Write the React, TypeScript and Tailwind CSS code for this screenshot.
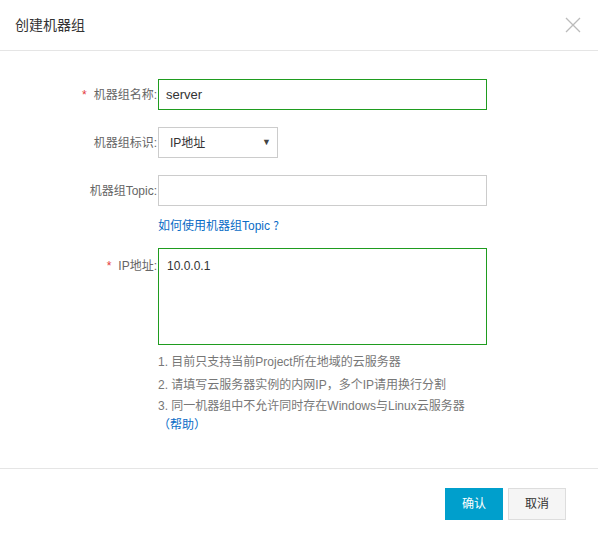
import React from 'react';

const font = "font-['Liberation_Sans','Noto_Sans_CJK_SC',sans-serif]";
const cjk = "font-['Noto_Sans_CJK_SC',sans-serif]";

const Label: React.FC<{ text: string; required?: boolean }> = ({ text, required }) => (
  <div className="w-[158px] shrink-0 text-right text-[12px] text-[#666] pr-[1px]">
    {required && <span className="text-[#e4393c] mr-[7px]">*</span>}
    {text}
  </div>
);

const App: React.FC = () => {
  return (
    <div className={`w-[598px] h-[540px] bg-white flex flex-col ${font}`}>
      {/* Header */}
      <div className="h-[51px] shrink-0 flex items-center justify-between pl-[15px] pr-[17px] border-b border-[#e5e5e5]">
        <span className="text-[14px] text-[#333]">创建机器组</span>
        <svg width="16" height="16" viewBox="0 0 16 16" className="text-[#bbb]">
          <path d="M1 1 L15 15 M15 1 L1 15" stroke="currentColor" strokeWidth="1.3" />
        </svg>
      </div>

      {/* Body */}
      <div className="flex-1 flex flex-col pt-[28px]">
        <div className="flex items-center">
          <Label text="机器组名称:" required />
          <div className="w-[329px] h-[31px] border border-[#1f9c1f] flex items-center px-[7px] text-[13px] text-[#333]">
            server
          </div>
        </div>

        <div className="flex items-center mt-[17px]">
          <Label text="机器组标识:" />
          <div className="w-[120px] h-[31px] border border-[#ccc] flex items-center justify-between pl-[11px] pr-[6px] text-[12px] text-[#333]">
            <span>IP地址</span>
            <span className="text-[9px] text-[#444]">▼</span>
          </div>
        </div>

        <div className="flex items-center mt-[17px]">
          <Label text="机器组Topic:" />
          <div className="w-[329px] h-[31px] border border-[#ccc]" />
        </div>

        <div className="flex mt-[10px]">
          <div className="w-[158px] shrink-0" />
          <a className="text-[12px] leading-[17px] text-[#0a6cc6]">
            如何使用机器组Topic <span className={cjk}>?</span>
          </a>
        </div>

        <div className="flex items-start mt-[13px]">
          <div className="pt-[9px]">
            <Label text="IP地址:" required />
          </div>
          <div className="w-[329px] h-[97px] border border-[#1f9c1f] px-[8px] pt-[8px] text-[12px] text-[#333]">
            10.0.0.1
          </div>
        </div>

        <div className="flex mt-[9px]">
          <div className="w-[158px] shrink-0" />
          <div className="flex flex-col text-[12px] leading-[17px] text-[#777]">
            <div>1. 目前只支持当前Project所在地域的云服务器</div>
            <div className="mt-[4px]">
              2. 请填写云服务器实例的内网IP<span className={cjk}>，</span>多个IP请用换行分割
            </div>
            <div className="mt-[4px]">3. 同一机器组中不允许同时存在Windows与Linux云服务器</div>
            <div className={`text-[#0a6cc6] ${cjk}`}>（帮助）</div>
          </div>
        </div>
      </div>

      {/* Footer */}
      <div className="h-[72px] shrink-0 border-t border-[#e5e5e5] flex items-start justify-end gap-[5px] pt-[19px] pr-[32px]">
        <button className="w-[58px] h-[32px] bg-[#009fcc] text-white text-[12px]">确认</button>
        <button className="w-[58px] h-[32px] bg-[#f5f5f5] border border-[#ddd] text-[#333] text-[12px]">取消</button>
      </div>
    </div>
  );
};

export default App;
